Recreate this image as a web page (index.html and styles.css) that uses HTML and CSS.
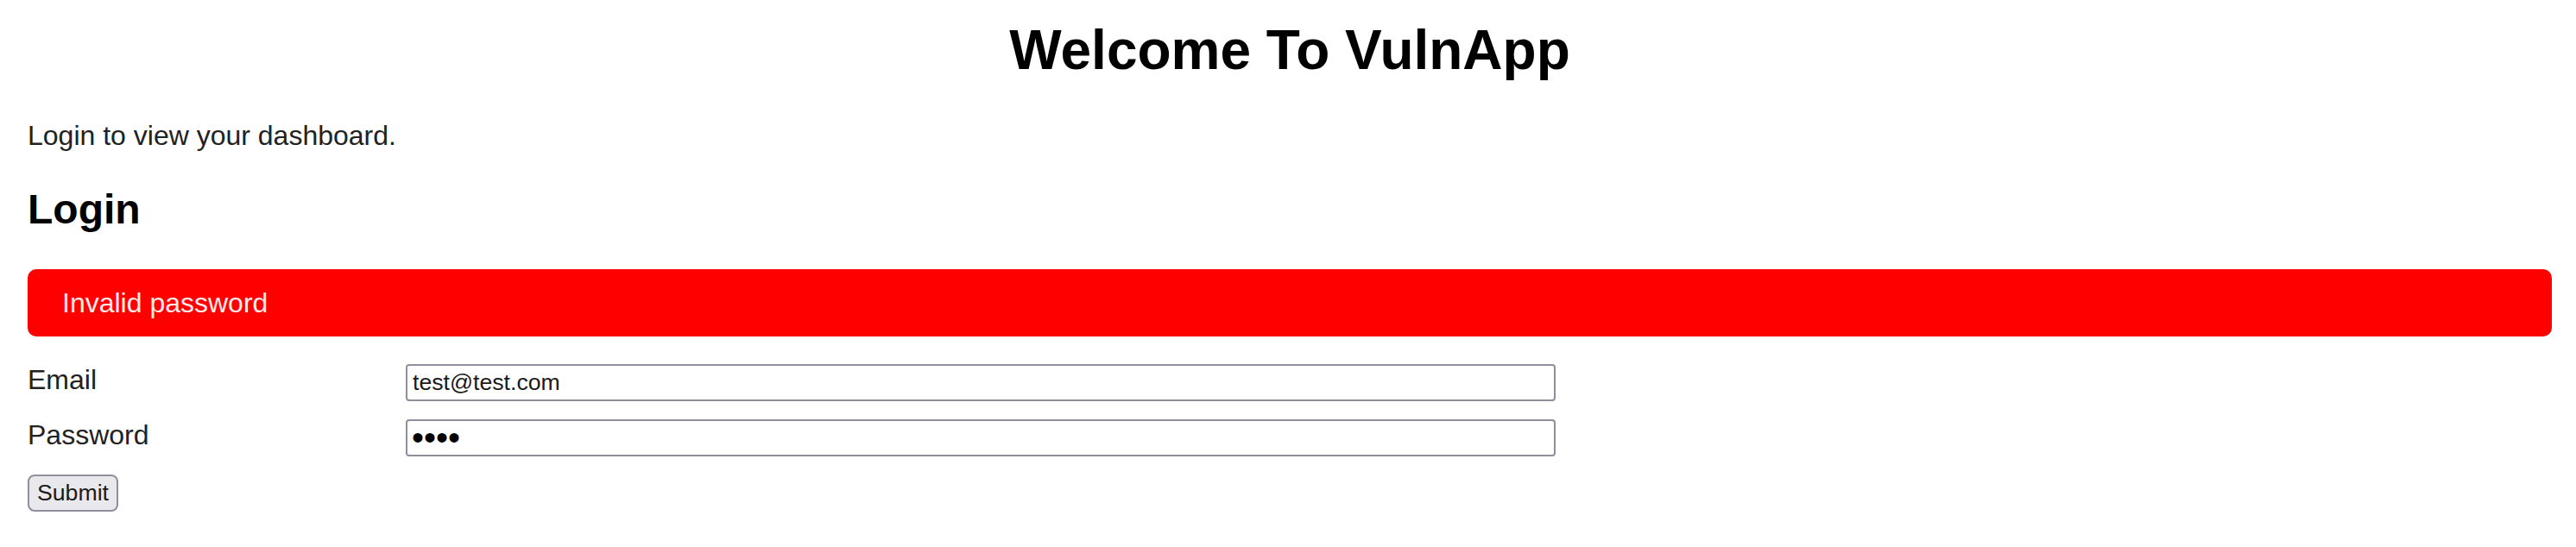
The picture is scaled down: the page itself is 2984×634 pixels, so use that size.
FILE: index.html
```html
<!DOCTYPE html>
<html lang="en">
<head>
<meta charset="utf-8">
<title>VulnApp - Login</title>
<link rel="stylesheet" href="styles.css">
</head>
<body>
<div class="page">
  <h1 class="title">Welcome To VulnApp</h1>
  <p class="intro">Login to view your dashboard.</p>
  <h2 class="section-title">Login</h2>
  <div class="alert">Invalid password</div>
  <form class="login-form" action="#" method="post">
    <label class="field-label" for="email">Email</label>
    <input class="field-input" id="email" name="email" type="text" value="test@test.com">
    <label class="field-label" for="password">Password</label>
    <input class="field-input field-input--password" id="password" name="password" type="password" value="test">
    <div class="actions">
      <button class="submit-btn" type="submit">Submit</button>
    </div>
  </form>
</div>
</body>
</html>
```
FILE: styles.css
```css
* {
  box-sizing: border-box;
}

html, body {
  margin: 0;
  padding: 0;
  background: #ffffff;
}

body {
  font-family: "Liberation Sans", Arial, sans-serif;
  color: #222222;
}

.page {
  padding: 22px 28px 0 32px;
}

.title {
  margin: 0 0 45px 0;
  font-size: 64px;
  line-height: 72px;
  font-weight: bold;
  text-align: center;
  color: #000000;
}

.intro {
  margin: 0 0 41px 0;
  font-size: 32px;
  line-height: 36px;
}

.section-title {
  margin: 0 0 42px 0;
  font-size: 48px;
  line-height: 54px;
  font-weight: bold;
  color: #000000;
}

.alert {
  background: #ff0000;
  color: #ffeaea;
  border-radius: 10px;
  padding: 21px 40px 21px 40px;
  font-size: 32px;
  line-height: 36px;
}

.login-form {
  margin-top: 32px;
  display: grid;
  grid-template-columns: 438px 1332px;
  grid-auto-rows: 43px;
  row-gap: 21px;
  align-items: start;
}

.field-label {
  font-size: 32px;
  line-height: 36px;
}

.field-input {
  width: 1332px;
  height: 43px;
  margin: 0;
  padding: 0 6px;
  border: 2px solid #8f8f9d;
  border-radius: 4px;
  background: #ffffff;
  font-family: "Liberation Sans", Arial, sans-serif;
  font-size: 26.67px;
  color: #1a1a1a;
  outline: none;
}

.field-input--password {
  font-size: 40px;
  padding: 0 5px;
  color: #000000;
}

.actions {
  grid-column: 1 / span 2;
}

.submit-btn {
  height: 43px;
  margin: 0;
  padding: 0 9px;
  border: 2px solid #8f8f9d;
  border-radius: 8px;
  background: #e9e9ed;
  font-family: "Liberation Sans", Arial, sans-serif;
  font-size: 26.67px;
  color: #1a1a1a;
  cursor: pointer;
}
```
